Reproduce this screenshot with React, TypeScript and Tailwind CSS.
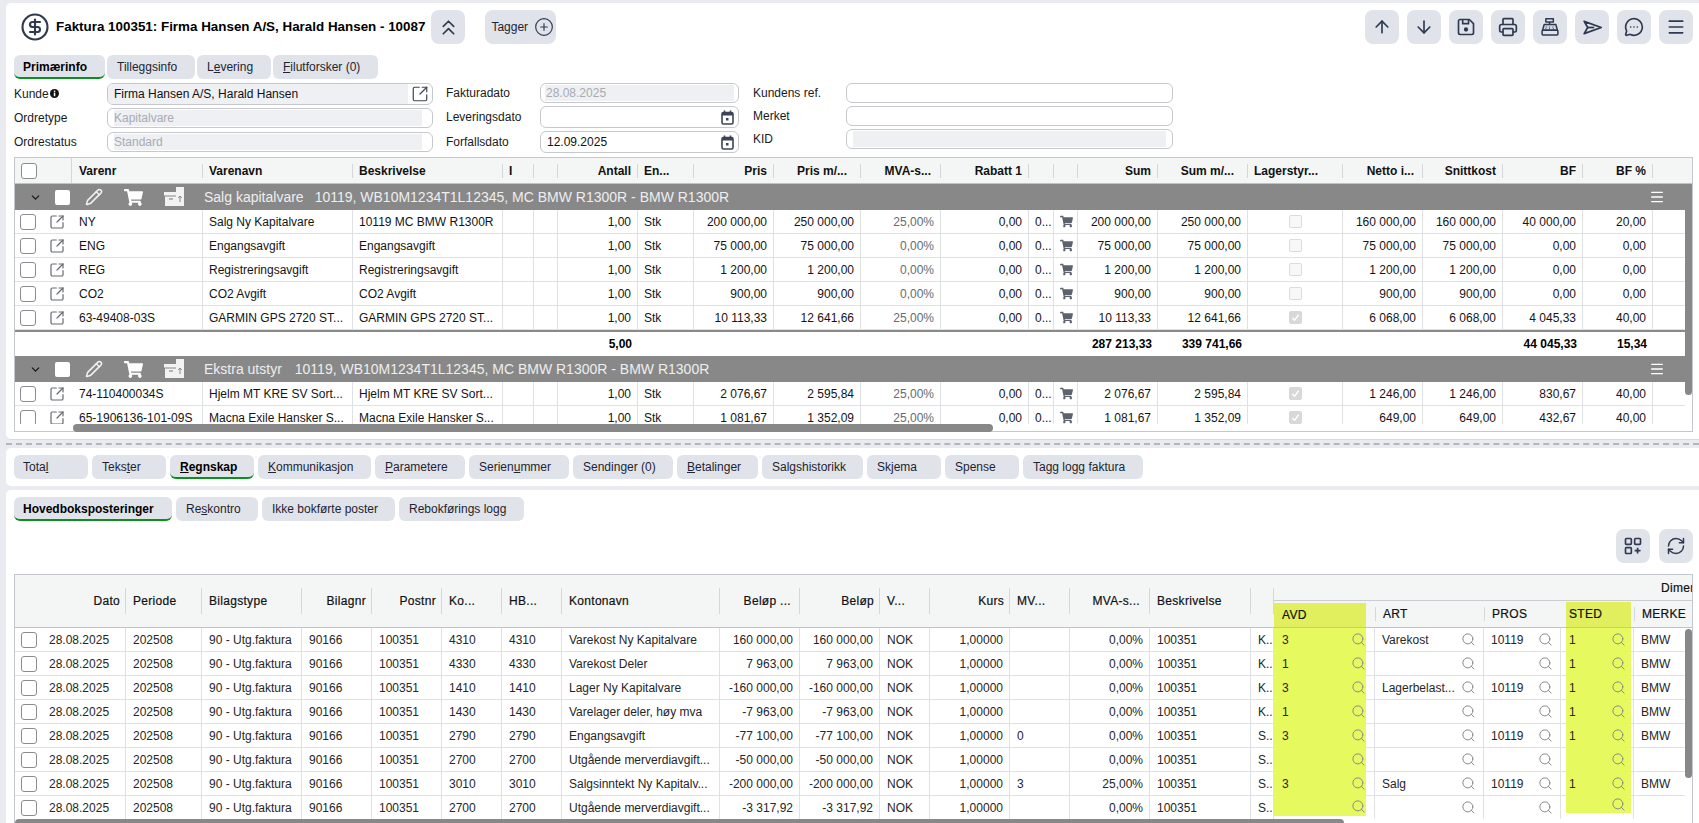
import React from "react";
import {
  ArrowDown,
  ArrowUp,
  ChevronDown,
  ChevronsUp,
  CircleDollarSign,
  CirclePlus,
  Menu,
  MessageCircleMore,
  Pencil,
  Printer,
  RefreshCw,
  Search,
  SquareArrowOutUpRight,
} from "lucide-react";
import { FaShoppingCart } from "react-icons/fa";

const ICON = "#2f3a50";

const SaveIcon = () => (
  <svg width="20" height="20" viewBox="0 0 24 24" fill="none" stroke={ICON} strokeWidth="2" strokeLinejoin="round">
    <path d="M5 3h11l5 5v11a2 2 0 0 1-2 2H5a2 2 0 0 1-2-2V5a2 2 0 0 1 2-2z" />
    <path d="M8 3v5h7V3" />
    <circle cx="12" cy="15" r="1.6" fill={ICON} />
  </svg>
);
const RegisterIcon = () => (
  <svg width="20" height="20" viewBox="0 0 24 24" fill="none" stroke={ICON} strokeWidth="1.8" strokeLinejoin="round">
    <rect x="7" y="2" width="9" height="4" />
    <path d="M11.5 6v3" />
    <path d="M5 9h14l2 7H3z" fill="#cfd3dc" />
    <rect x="2.5" y="16" width="19" height="5.5" rx="1" />
    <path d="M7 12h1M11 12h1M15 12h1M6.5 14h1M11 14h1M15.5 14h1" strokeWidth="1.2" />
  </svg>
);
const SendIcon = () => (
  <svg width="21" height="21" viewBox="0 0 24 24" fill="none" stroke={ICON} strokeWidth="2" strokeLinejoin="round">
    <path d="M2.5 5 22 12 2.5 19 6.5 12z" />
    <path d="M6.5 12H14" />
  </svg>
);
const GridPlusIcon = () => (
  <svg width="20" height="20" viewBox="0 0 24 24" fill="none" stroke={ICON} strokeWidth="2" strokeLinejoin="round">
    <rect x="3" y="3" width="7" height="7" rx="1" />
    <rect x="14" y="3" width="7" height="7" rx="1" />
    <rect x="3" y="14" width="7" height="7" rx="1" />
    <path d="M17.5 14v7M14 17.5h7" />
  </svg>
);
const CalendarIcon = () => (
  <svg width="13" height="15" viewBox="0 0 13 15" fill="none">
    <rect x="1" y="2.5" width="11" height="11.5" rx="1.5" stroke="#3c4555" strokeWidth="1.6" />
    <rect x="1" y="2.5" width="11" height="3" fill="#3c4555" />
    <path d="M3.5 0.5v3M9.5 0.5v3" stroke="#3c4555" strokeWidth="1.6" />
    <rect x="5" y="8" width="2.5" height="2.5" fill="#3c4555" />
  </svg>
);
const BoxesIcon = () => (
  <svg width="22" height="20" viewBox="0 0 22 20">
    <path d="M13 0h8v19h-8z" fill="#f2f2f2" />
    <path d="M1 5h13v3.5H1z" fill="#f2f2f2" />
    <path d="M2 9.5h12V19H2z" fill="#f2f2f2" />
    <path d="M6 12h4" stroke="#888" strokeWidth="1.2" />
    <path d="M17 15V9M15.2 11 17 9l1.8 2" stroke="#888" strokeWidth="1" fill="none" />
  </svg>
);

function IconButton({ children }: { children: React.ReactNode }) {
  return (
    <button className="flex h-[34px] w-[34px] items-center justify-center rounded-lg bg-[#e0e3ea]">{children}</button>
  );
}

type TabDef = { w: string; node: React.ReactNode; active?: boolean };

function Tabs({ tabs, gap = "gap-[4px]" }: { tabs: TabDef[]; gap?: string }) {
  return (
    <div className={`flex ${gap}`}>
      {tabs.map((t, i) => (
        <div
          key={i}
          className={`flex h-[24px] shrink-0 items-center rounded-[6px] bg-[#e0e3ea] pl-[10px] first:pl-[9px] ${t.w} ${
            t.active ? "border-b-2 border-[#0b8f1d] pt-[2px] font-bold text-black" : "text-[#1f2430]"
          }`}
        >
          <span>{t.node}</span>
        </div>
      ))}
    </div>
  );
}

function Field({
  label,
  labelW,
  h,
  children,
}: {
  label: React.ReactNode;
  labelW: string;
  h: string;
  children?: React.ReactNode;
}) {
  return (
    <div className={`flex items-center ${h}`}>
      <div className={`flex shrink-0 items-center ${labelW} text-[#1a1a1a]`}>{label}</div>
      <div className="flex h-full min-w-0 flex-1 items-center rounded-[6px] border-[1.5px] border-[#c6c8cc] bg-white">
        {children}
      </div>
    </div>
  );
}

function Disabled({ text, cls }: { text?: string; cls: string }) {
  return <div className={`flex h-[16px] items-center bg-[#eef0f4] text-[#a8abb2] ${cls}`}>{text}</div>;
}

const Check = ({ cls = "" }: { cls?: string }) => (
  <div className={`h-[16px] w-[16px] shrink-0 rounded-[3px] border-[1.5px] border-[#8b8d92] bg-white ${cls}`} />
);

const LineCheck = ({ on }: { on: boolean }) => (
  <div
    className={`mx-auto flex h-[13px] w-[13px] items-center justify-center rounded-[2px] border ${
      on ? "border-[#d8d8d8] bg-[#d8d8d8]" : "border-[#dcdcdc] bg-[#f8f8f8]"
    }`}
  >
    {on && (
      <svg width="9" height="9" viewBox="0 0 10 10" fill="none">
        <path d="M1.5 5.5 4 8l4.5-6" stroke="#fff" strokeWidth="1.6" />
      </svg>
    )}
  </div>
);

/* ---------- top grid ---------- */
const topCols = ["w-[57px]", "w-[131px]", "w-[150px]", "w-[150px]", "w-[31px]", "w-[24px]", "w-[80px]", "w-[56px]", "w-[80px]", "w-[87px]", "w-[80px]", "w-[88px]", "w-[25px]", "w-[24px]", "w-[80px]", "w-[90px]", "w-[95px]", "w-[80px]", "w-[80px]", "w-[80px]", "w-[70px]", "w-[60px]"];

const TopColgroup = () => (
  <colgroup>
    {topCols.map((c, i) => (
      <col key={i} className={c} />
    ))}
  </colgroup>
);

const topHead: [string, string][] = [
  ["Varenr", "text-left !pl-[7px]"],
  ["Varenavn", "text-left"],
  ["Beskrivelse", "text-left"],
  ["I", "text-left"],
  ["", "text-left"],
  ["Antall", "text-right"],
  ["En...", "text-left"],
  ["Pris", "text-right"],
  ["Pris m/...", "text-right pr-[13px]"],
  ["MVA-s...", "text-right pr-[9px]"],
  ["Rabatt 1", "text-right"],
  ["", "text-left"],
  ["", "text-left"],
  ["Sum", "text-right"],
  ["Sum m/...", "text-right pr-[13px]"],
  ["Lagerstyr...", "text-left"],
  ["Netto i...", "text-right pr-[8px]"],
  ["Snittkost", "text-right"],
  ["BF", "text-right"],
  ["BF %", "text-right"],
];

type Line = [string, string, string, string, string, string, string, string, boolean, string, string, string, string];

const salg: Line[] = [
  ["NY", "Salg Ny Kapitalvare", "10119 MC BMW R1300R", "200 000,00", "250 000,00", "25,00%", "200 000,00", "250 000,00", false, "160 000,00", "160 000,00", "40 000,00", "20,00"],
  ["ENG", "Engangsavgift", "Engangsavgift", "75 000,00", "75 000,00", "0,00%", "75 000,00", "75 000,00", false, "75 000,00", "75 000,00", "0,00", "0,00"],
  ["REG", "Registreringsavgift", "Registreringsavgift", "1 200,00", "1 200,00", "0,00%", "1 200,00", "1 200,00", false, "1 200,00", "1 200,00", "0,00", "0,00"],
  ["CO2", "CO2 Avgift", "CO2 Avgift", "900,00", "900,00", "0,00%", "900,00", "900,00", false, "900,00", "900,00", "0,00", "0,00"],
  ["63-49408-03S", "GARMIN GPS 2720 ST...", "GARMIN GPS 2720 ST...", "10 113,33", "12 641,66", "25,00%", "10 113,33", "12 641,66", true, "6 068,00", "6 068,00", "4 045,33", "40,00"],
];
const ekstra: Line[] = [
  ["74-110400034S", "Hjelm MT KRE SV Sort...", "Hjelm MT KRE SV Sort...", "2 076,67", "2 595,84", "25,00%", "2 076,67", "2 595,84", true, "1 246,00", "1 246,00", "830,67", "40,00"],
  ["65-1906136-101-09S", "Macna Exile Hansker S...", "Macna Exile Hansker S...", "1 081,67", "1 352,09", "25,00%", "1 081,67", "1 352,09", true, "649,00", "649,00", "432,67", "40,00"],
];

const td = "h-[24px] overflow-hidden whitespace-nowrap border-b border-r border-[#dfe2e5] px-[6px] text-[#141414]";
const tdR = `${td} text-right`;

function LineRow({ l }: { l: Line }) {
  return (
    <tr>
      <td className="h-[24px] border-b border-[#dfe2e5]">
        <div className="flex items-center">
          <Check cls="ml-[5px]" />
          <SquareArrowOutUpRight size={16} strokeWidth={1.8} color="#666a70" className="ml-[13px]" />
        </div>
      </td>
      <td className={`${td} !pl-[7px]`}>{l[0]}</td>
      <td className={td}>{l[1]}</td>
      <td className={td}>{l[2]}</td>
      <td className={td} />
      <td className={td} />
      <td className={tdR}>1,00</td>
      <td className={td}>Stk</td>
      <td className={tdR}>{l[3]}</td>
      <td className={tdR}>{l[4]}</td>
      <td className={`${tdR} !text-[#666a70]`}>{l[5]}</td>
      <td className={tdR}>0,00</td>
      <td className={td}>0...</td>
      <td className={`${td} !px-0`}>
        <FaShoppingCart size={13} color="#5d6270" className="ml-[6px]" />
      </td>
      <td className={tdR}>{l[6]}</td>
      <td className={tdR}>{l[7]}</td>
      <td className={td}>
        <LineCheck on={l[8]} />
      </td>
      <td className={tdR}>{l[9]}</td>
      <td className={tdR}>{l[10]}</td>
      <td className={tdR}>{l[11]}</td>
      <td className={tdR}>{l[12]}</td>
      <td className="h-[24px] border-b border-[#dfe2e5]" />
    </tr>
  );
}

function GroupRow({ name, gap }: { name: string; gap: string }) {
  return (
    <tr>
      <td colSpan={22} className="h-[26px] bg-[#888888] p-0">
        <div className="flex h-[26px] items-center text-[14px] text-[#eeeeee]">
          <ChevronDown size={13} color="#111" className="ml-[14px]" />
          <div className="ml-[13px] h-[15px] w-[15px] rounded-[2px] bg-white" />
          <Pencil size={18} color="#f0f0f0" strokeWidth={2} className="ml-[15px]" />
          <FaShoppingCart size={19} color="#fff" className="ml-[21px]" />
          <div className="ml-[20px]">
            <BoxesIcon />
          </div>
          <span className="ml-[19px]">{name}</span>
          <span className={gap}>10119, WB10M1234T1L12345, MC BMW R1300R - BMW R1300R</span>
          <Menu size={16} color="#fff" className="ml-auto mr-[48px]" />
        </div>
      </td>
    </tr>
  );
}

function SumRow() {
  const c = "h-[26px] border-t-2 border-[#8a8a8a] px-[6px] text-right font-bold text-black whitespace-nowrap";
  const vals: Record<number, string> = { 6: "5,00", 14: "287 213,33", 15: "339 741,66", 19: "44 045,33", 20: "15,34" };
  return (
    <tr>
      {topCols.map((_, i) => (
        <td key={i} className={c}>
          {vals[i] ?? ""}
        </td>
      ))}
    </tr>
  );
}

function TopGrid() {
  return (
    <div className="mr-[6px] mt-[4px] border border-[#c4c8cc]">
      <div className="h-[26px] overflow-hidden border-b border-[#bfc3c7] bg-[#f4f6f6]">
        <table className="w-[1698px] table-fixed border-separate border-spacing-0">
          <TopColgroup />
          <thead>
            <tr>
              <th className="h-[25px] border-r border-[#d5d8da] p-0">
                <Check cls="ml-[6px]" />
              </th>
              {topHead.map(([t, a], i) => (
                <th key={i} className="h-[25px] p-0 font-bold text-[#111]">
                  <div className={`flex h-[14px] items-center overflow-hidden whitespace-nowrap border-r border-[#d5d8da] px-[6px] ${a.includes("text-right") ? "justify-end" : ""} ${a}`}>
                    {t}
                  </div>
                </th>
              ))}
              <th />
            </tr>
          </thead>
        </table>
      </div>
      <div className="flex h-[240px]">
        <div className="min-w-0 flex-1 overflow-hidden">
          <table className="w-[1698px] table-fixed border-separate border-spacing-0">
            <TopColgroup />
            <tbody>
              <GroupRow name="Salg kapitalvare" gap="ml-[11px]" />
              {salg.map((l) => (
                <LineRow key={l[0]} l={l} />
              ))}
              <SumRow />
              <GroupRow name="Ekstra utstyr" gap="ml-[13px]" />
              {ekstra.map((l) => (
                <LineRow key={l[0]} l={l} />
              ))}
            </tbody>
          </table>
        </div>
        <div className="w-[7px] shrink-0">
          <div className="h-[211px] rounded-b-full bg-[#888888]" />
        </div>
      </div>
      <div className="h-[7px]">
        <div className="ml-[58px] h-[8px] w-[920px] rounded-full bg-[#888888]" />
      </div>
    </div>
  );
}

/* ---------- bottom grid ---------- */
const botCols = ["w-[111px]", "w-[76px]", "w-[100px]", "w-[70px]", "w-[70px]", "w-[60px]", "w-[60px]", "w-[158px]", "w-[80px]", "w-[80px]", "w-[50px]", "w-[80px]", "w-[60px]", "w-[80px]", "w-[101px]", "w-[23px]", "w-[101px]", "w-[109px]", "w-[77px]", "w-[73px]", "w-[80px]"];

const BotColgroup = () => (
  <colgroup>
    {botCols.map((c, i) => (
      <col key={i} className={c} />
    ))}
  </colgroup>
);

const botHead: [string, string][] = [
  ["Dato", "justify-end pr-[5px]"],
  ["Periode", "pl-[7px]"],
  ["Bilagstype", "pl-[7px]"],
  ["Bilagnr", "justify-end pr-[5px]"],
  ["Postnr", "justify-end pr-[5px]"],
  ["Ko...", "pl-[7px]"],
  ["HB...", "pl-[7px]"],
  ["Kontonavn", "pl-[7px]"],
  ["Beløp ...", "justify-end pr-[8px]"],
  ["Beløp", "justify-end pr-[5px]"],
  ["V...", "pl-[7px]"],
  ["Kurs", "justify-end pr-[5px]"],
  ["MV...", "pl-[7px]"],
  ["MVA-s...", "justify-end pr-[9px]"],
  ["Beskrivelse", "pl-[7px]"],
  ["", ""],
];

type Post = [string, string, string, string, string, string, string, string, string, string, string];
const posts: Post[] = [
  ["4310", "Varekost Ny Kapitalvare", "160 000,00", "", "0,00%", "K...", "3", "Varekost", "10119", "1", "BMW"],
  ["4330", "Varekost Deler", "7 963,00", "", "0,00%", "K...", "1", "", "", "1", "BMW"],
  ["1410", "Lager Ny Kapitalvare", "-160 000,00", "", "0,00%", "K...", "3", "Lagerbelast...", "10119", "1", "BMW"],
  ["1430", "Varelager deler, høy mva", "-7 963,00", "", "0,00%", "K...", "1", "", "", "1", "BMW"],
  ["2790", "Engangsavgift", "-77 100,00", "0", "0,00%", "S...", "3", "", "10119", "1", "BMW"],
  ["2700", "Utgående merverdiavgift...", "-50 000,00", "", "0,00%", "S...", "", "", "", "", ""],
  ["3010", "Salgsinntekt Ny Kapitalv...", "-200 000,00", "3", "25,00%", "S...", "3", "Salg", "10119", "1", "BMW"],
  ["2700", "Utgående merverdiavgift...", "-3 317,92", "", "0,00%", "S...", "", "", "", "", ""],
];

const btd = "h-[24px] overflow-hidden whitespace-nowrap border-b border-r border-[#dfe2e5] px-[7px] text-[#262626]";
const btdR = `${btd} !px-[6px] text-right`;
const Lens = ({ cls = "" }: { cls?: string }) => <Search size={15} color="#8a8a8a" strokeWidth={1.6} className={`shrink-0 ${cls}`} />;

function PostRow({ p, last }: { p: Post; last: boolean }) {
  return (
    <tr>
      <td className="h-[24px] border-b border-r border-[#dfe2e5]">
        <div className="flex items-center">
          <Check cls="ml-[6px]" />
          <span className="ml-[12px] text-[#262626]">28.08.2025</span>
        </div>
      </td>
      <td className={btd}>202508</td>
      <td className={btd}>90 - Utg.faktura</td>
      <td className={btd}>90166</td>
      <td className={btd}>100351</td>
      <td className={btd}>{p[0]}</td>
      <td className={btd}>{p[0]}</td>
      <td className={btd}>{p[1]}</td>
      <td className={btdR}>{p[2]}</td>
      <td className={btdR}>{p[2]}</td>
      <td className={btd}>NOK</td>
      <td className={btdR}>1,00000</td>
      <td className={btd}>{p[3]}</td>
      <td className={btdR}>{p[4]}</td>
      <td className={btd}>100351</td>
      <td className={`${btd} !pl-[7px] !pr-0`}>{p[5]}</td>
      <td className="h-[24px] border-b border-r border-[#dfe2e5] p-0 align-top">
        <div className={`flex w-[92px] items-center bg-[#e6f95f] pl-[8px] text-[#262626] ${last ? "h-[20px]" : "h-[23px]"}`}>
          {p[6]}
          <Lens cls="ml-auto" />
        </div>
      </td>
      <td className="h-[24px] border-b border-r border-[#dfe2e5] p-0">
        <div className="flex items-center pl-[7px] pr-[7px] text-[#262626]">
          {p[7]}
          <Lens cls="ml-auto" />
        </div>
      </td>
      <td className="h-[24px] border-b border-r border-[#dfe2e5] p-0">
        <div className="flex items-center pl-[7px] pr-[7px] text-[#262626]">
          {p[8]}
          <Lens cls="ml-auto" />
        </div>
      </td>
      <td className="h-[24px] border-b border-r border-[#dfe2e5] p-0 align-top">
        <div className={`ml-[5px] flex w-[65px] items-center bg-[#e6f95f] pl-[3px] pr-[5px] text-[#262626] ${last ? "h-[17px]" : "h-[23px]"}`}>
          {p[9]}
          <Lens cls="ml-auto" />
        </div>
      </td>
      <td className={btd}>{p[10]}</td>
    </tr>
  );
}

function BottomGrid() {
  const head = "font-normal tracking-[0.3px] text-[#111] [-webkit-text-stroke:0.2px_#111]";
  const subTh = `h-[26px] border-b border-[#bfc3c7] p-0 ${head}`;
  return (
    <div className="mr-[6px] mt-[11px] border-x border-t border-[#c4c8cc]">
      <div className="overflow-hidden bg-[#f4f6f6]">
        <table className="w-[1699px] table-fixed border-separate border-spacing-0">
          <BotColgroup />
          <thead>
            <tr>
              {botHead.map(([t, a], i) => (
                <th key={i} rowSpan={2} className={`h-[52px] border-b border-[#bfc3c7] p-0 ${head}`}>
                  <div className={`flex h-[26px] items-center overflow-hidden whitespace-nowrap border-r border-[#d5d8da] ${a}`}>{t}</div>
                </th>
              ))}
              <th colSpan={5} className={`h-[26px] overflow-hidden whitespace-nowrap border-b border-[#c9ccd0] pl-[387px] text-left ${head}`}>
                Dimensjoner
              </th>
            </tr>
            <tr>
              <th className={subTh}>
                <div className="mt-[2px] flex h-[24px] w-[92px] items-center bg-[#e1ee5d] pl-[8px]">AVD</div>
              </th>
              <th className={subTh}>
                <div className="flex h-[14px] items-center border-l border-[#d5d8da] pl-[7px]">ART</div>
              </th>
              <th className={subTh}>
                <div className="flex h-[14px] items-center border-l border-[#d5d8da] pl-[7px]">PROS</div>
              </th>
              <th className={subTh}>
                <div className="ml-[5px] flex h-[25px] w-[65px] items-center bg-[#e1ee5d] pl-[3px]">STED</div>
              </th>
              <th className={subTh}>
                <div className="flex h-[14px] items-center border-l border-[#d5d8da] pl-[7px]">MERKE</div>
              </th>
            </tr>
          </thead>
        </table>
      </div>
      <div className="flex h-[191px]">
        <div className="min-w-0 flex-1 overflow-hidden">
          <table className="w-[1699px] table-fixed border-separate border-spacing-0">
            <BotColgroup />
            <tbody>
              {posts.map((p, i) => (
                <PostRow key={i} p={p} last={i === posts.length - 1} />
              ))}
            </tbody>
          </table>
        </div>
        <div className="w-[7px] shrink-0 pt-px">
          <div className="h-[149px] rounded-full bg-[#888888]" />
        </div>
      </div>
      <div className="h-[8px] w-[1329px] rounded-full bg-[#888888]" />
    </div>
  );
}

export default function App() {
  const u = (s: string) => <span className="underline">{s}</span>;
  return (
    <div className="h-screen overflow-hidden bg-[#e9ebf0] pl-[6px] pt-[3px] font-['Liberation_Sans',Arial,sans-serif] text-[12px] leading-[14px]">
      {/* upper panel */}
      <section className="h-[437px] rounded-l-[5px] border-b border-[#d8dadf] bg-white pl-[8px] pt-[7px]">
        <header className="flex h-[34px] items-center pr-[6px]">
          <CircleDollarSign size={30} color={ICON} strokeWidth={1.7} className="ml-[6px]" />
          <h1 className="ml-[6px] whitespace-nowrap text-[13.4px] font-bold text-black">
            Faktura 100351: Firma Hansen A/S, Harald Hansen - 10087
          </h1>
          <div className="ml-[6px]">
            <IconButton>
              <ChevronsUp size={25} color={ICON} strokeWidth={1.6} />
            </IconButton>
          </div>
          <button className="ml-[20px] flex h-[34px] w-[71px] items-center justify-between rounded-lg bg-[#e0e3ea] pl-[6px] pr-[2px] text-[#1f2430]">
            Tagger
            <CirclePlus size={20} color={ICON} strokeWidth={1.4} />
          </button>
          <div className="ml-auto flex gap-[8px]">
            <IconButton><ArrowUp size={20} color={ICON} /></IconButton>
            <IconButton><ArrowDown size={20} color={ICON} /></IconButton>
            <IconButton><SaveIcon /></IconButton>
            <IconButton><Printer size={20} color={ICON} /></IconButton>
            <IconButton><RegisterIcon /></IconButton>
            <IconButton><SendIcon /></IconButton>
            <IconButton><MessageCircleMore size={20} color={ICON} /></IconButton>
            <IconButton><Menu size={20} color={ICON} /></IconButton>
          </div>
        </header>

        <div className="mt-[11px]">
          <Tabs
            gap="gap-[2px]"
            tabs={[
              { w: "w-[91px]", node: "Primærinfo", active: true },
              { w: "w-[88px]", node: "Tilleggsinfo" },
              { w: "w-[74px]", node: <>L{u("e")}vering</> },
              { w: "w-[105px]", node: <>{u("F")}ilutforsker (0)</> },
            ]}
          />
        </div>

        <div className="mt-[4px] flex h-[70px] items-start">
          <div className="flex w-[419px] flex-col">
            <Field
              labelW="w-[93px]"
              h="h-[22px]"
              label={
                <>
                  Kunde
                  <svg width="9" height="9" viewBox="0 0 9 9" className="ml-[1px] -mt-[2px]">
                    <circle cx="4.5" cy="4.5" r="4.5" fill="#111" />
                    <rect x="3.8" y="3.6" width="1.5" height="3.6" fill="#fff" />
                    <rect x="3.8" y="1.6" width="1.5" height="1.3" fill="#fff" />
                  </svg>
                </>
              }
            >
              <div className="flex h-full min-w-0 flex-1 items-center rounded-l-[5px] bg-[#eef0f4] pl-[6px] text-[#111]">
                Firma Hansen A/S, Harald Hansen
              </div>
              <div className="flex w-[24px] shrink-0 items-center justify-center">
                <SquareArrowOutUpRight size={18} color="#3c4555" strokeWidth={1.6} />
              </div>
            </Field>
            <div className="mt-[3px]">
              <Field labelW="w-[93px]" h="h-[20px]" label="Ordretype">
                <Disabled text="Kapitalvare" cls="ml-[6px] mr-[10px] flex-1" />
              </Field>
            </div>
            <div className="mt-[4px]">
              <Field labelW="w-[93px]" h="h-[20px]" label="Ordrestatus">
                <Disabled text="Standard" cls="ml-[6px] mr-[10px] flex-1" />
              </Field>
            </div>
          </div>

          <div className="ml-[13px] flex w-[293px] flex-col">
            <Field labelW="w-[94px]" h="h-[20px]" label="Fakturadato">
              <Disabled text="28.08.2025" cls="mx-[4px] flex-1 pl-[1px]" />
            </Field>
            <div className="mt-[3px]">
              <Field labelW="w-[94px]" h="h-[22px]" label="Leveringsdato">
                <div className="ml-auto mr-[4px]"><CalendarIcon /></div>
              </Field>
            </div>
            <div className="mt-[3px]">
              <Field labelW="w-[94px]" h="h-[22px]" label="Forfallsdato">
                <span className="ml-[6px] text-[#111]">12.09.2025</span>
                <div className="ml-auto mr-[4px]"><CalendarIcon /></div>
              </Field>
            </div>
          </div>

          <div className="ml-[14px] flex w-[420px] flex-col">
            <Field labelW="w-[93px]" h="h-[20px]" label="Kundens ref." />
            <div className="mt-[3px]">
              <Field labelW="w-[93px]" h="h-[20px]" label="Merket" />
            </div>
            <div className="mt-[3px]">
              <Field labelW="w-[93px]" h="h-[20px]" label="KID">
                <Disabled cls="mx-[6px] flex-1" />
              </Field>
            </div>
          </div>
        </div>

        <TopGrid />
      </section>

      {/* splitter */}
      <div className="flex h-[8px] items-center">
        <div className="w-full border-t-2 border-dashed border-[#b3b6bb]" />
      </div>

      {/* tab strip */}
      <section className="flex h-[38px] items-center rounded-l-[5px] bg-white pl-[8px]">
        <Tabs
          tabs={[
            { w: "w-[74px]", node: <>Tota{u("l")}</> },
            { w: "w-[74px]", node: <>Teks{u("t")}er</> },
            { w: "w-[84px]", node: <>{u("R")}egnskap</>, active: true },
            { w: "w-[113px]", node: <>{u("K")}ommunikasjon</> },
            { w: "w-[90px]", node: <>{u("P")}arametere</> },
            { w: "w-[100px]", node: <>Serien{u("u")}mmer</> },
            { w: "w-[100px]", node: <>Sendin{u("g")}er (0)</> },
            { w: "w-[81px]", node: <>{u("B")}etalinger</> },
            { w: "w-[101px]", node: "Salgshistorikk" },
            { w: "w-[74px]", node: "Skjema" },
            { w: "w-[74px]", node: "Spense" },
            { w: "w-[120px]", node: "Tagg logg faktura" },
          ]}
        />
      </section>

      {/* lower panel */}
      <section className="mt-[4px] h-[400px] rounded-l-[5px] bg-white pl-[8px] pt-[7px]">
        <Tabs
          tabs={[
            { w: "w-[158px]", node: "Hovedboksposteringer", active: true },
            { w: "w-[82px]", node: <>Re{u("s")}kontro</> },
            { w: "w-[133px]", node: "Ikke bokførte poster" },
            { w: "w-[125px]", node: "Rebokførings logg" },
          ]}
        />
        <div className="mt-[8px] flex justify-end gap-[9px] pr-[6px]">
          <IconButton><GridPlusIcon /></IconButton>
          <IconButton><RefreshCw size={20} color={ICON} strokeWidth={1.8} /></IconButton>
        </div>
        <BottomGrid />
      </section>
    </div>
  );
}
